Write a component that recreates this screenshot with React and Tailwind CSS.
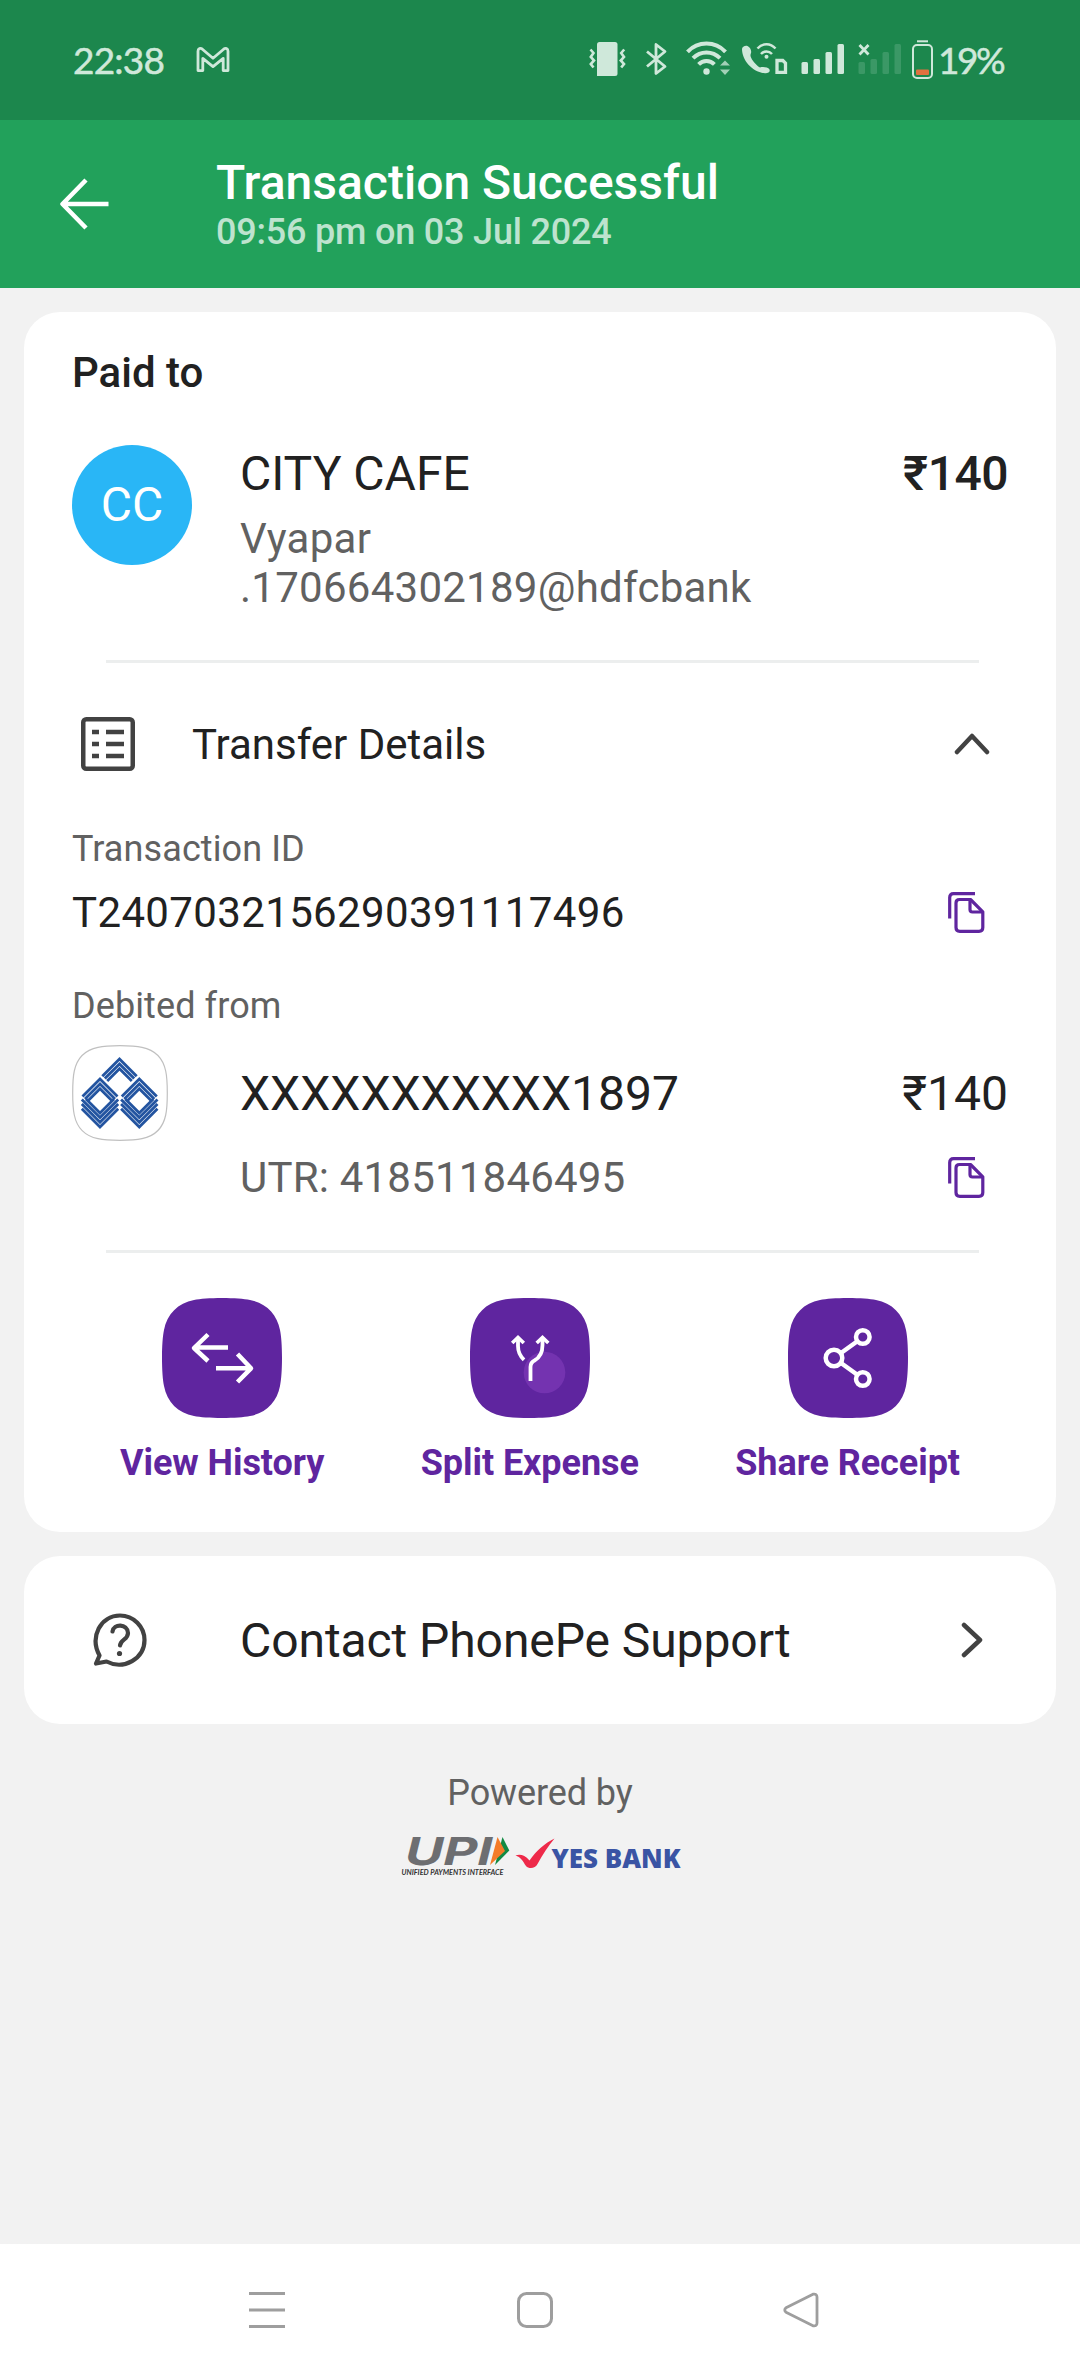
import React from 'react';

const LIGHT = '#cfe8da';

function GmailIcon() {
  return (
    <svg width="34" height="28" viewBox="0 0 34 28" fill="none" stroke={LIGHT} strokeWidth="2.8" strokeLinejoin="round">
      <path d="M2 24.6V5.2C2 2.4 4.4 1.6 6.4 3.2L17 12.2L27.6 3.2C29.6 1.6 32 2.4 32 5.2V24.6H27.2V12.4L17 20.6L6.8 12.4V24.6Z" />
    </svg>
  );
}

function StatusIcons() {
  return (
    <div className="flex items-center">
      {/* vibrate */}
      <svg className="mr-5" width="37" height="40" viewBox="0 0 37 40" fill="none" stroke={LIGHT} strokeWidth="2.6">
        <path d="M8 36V4.5Q8 2 10.5 2H26Q28.5 2 28.5 4.5V33.5Q28.5 36 26 36Z" fill={LIGHT} stroke="none" />
        <path d="M1.5 9.5L4.5 13L1.8 17L5 20.5L1.8 24L4.5 27.5" />
        <path d="M35.2 9.5L32.2 13L35 17L31.8 20.5L35 24L32.2 27.5" />
      </svg>
      {/* bluetooth */}
      <svg className="mr-[19px]" width="21" height="40" viewBox="0 0 21 40" fill="none" stroke={LIGHT} strokeWidth="2.8">
        <path d="M1 11.5L19 26.5L10 33.5V4.5L19 11.5L1 26.5" strokeLinejoin="round" />
      </svg>
      {/* wifi */}
      <svg className="mr-[11px]" width="44" height="40" viewBox="0 0 44 40" fill="none" stroke={LIGHT} strokeWidth="4">
        <path d="M1.5 11.8C12 0.8 29 0.8 39.5 11.8" />
        <path d="M7 18.2C14.6 10.6 26.4 10.6 34 18.2" />
        <path d="M12.6 24.4C17 20 24 20 28.4 24.4" />
        <circle cx="20.5" cy="31.5" r="3.2" fill={LIGHT} stroke="none" />
        <path d="M34 25.5L39 20.5L44 25.5ZM34 29.5H44L39 35Z" fill={LIGHT} stroke="none" opacity="0.75" />
      </svg>
      {/* wifi calling */}
      <svg className="mr-[13px]" width="47" height="40" viewBox="0 0 47 40" fill="none" stroke={LIGHT} strokeWidth="2.5">
        <path d="M1 9C1 7 4 5.2 6.5 6C9 7 10.8 10.5 10 13C9.3 15 9 16 11 19.5C13.5 23.3 17 26.6 19 27.5C21.5 26.5 27 27 28.5 29.5C29.5 32 27 33.5 24 33.3C11 32 1 20 1 9Z" fill={LIGHT} stroke="none" />
        <path d="M16.5 8.5C21.5 2.8 29.5 2.8 34.5 8.5M20 14C23 10.7 28 10.7 31 14" />
        <circle cx="25.5" cy="16.8" r="2" fill={LIGHT} stroke="none" />
        <path d="M36 20.5H41.8L44.5 23.2V32.3H36Z" strokeWidth="3.3" />
      </svg>
      {/* signal, sim 1 */}
      <svg className="mr-3.5" width="43" height="40" viewBox="0 0 43 40" fill={LIGHT}>
        <rect x="0.5" y="22" width="6.5" height="12" rx="1.5" />
        <rect x="12.5" y="19" width="6.5" height="15" rx="1.5" />
        <rect x="24.5" y="12" width="6.5" height="22" rx="1.5" />
        <rect x="36.5" y="4" width="6.5" height="30" rx="1.5" />
      </svg>
      {/* signal, sim 2 (no service) */}
      <svg className="mr-2.5" width="44" height="40" viewBox="0 0 44 40">
        <g fill="#3b9866">
          <rect x="0.5" y="22" width="6.5" height="12" rx="1.5" />
          <rect x="12.5" y="19" width="6.5" height="15" rx="1.5" />
          <rect x="24.5" y="12" width="6.5" height="22" rx="1.5" />
          <rect x="36.5" y="4" width="6.5" height="30" rx="1.5" />
        </g>
        <path d="M1.5 5L10.5 14.5M10.5 5L1.5 14.5" stroke={LIGHT} strokeWidth="2.8" />
      </svg>
      {/* battery */}
      <svg className="mr-[5px]" width="21" height="40" viewBox="0 0 21 40" fill="none">
        <rect x="5" y="0.3" width="11" height="2" fill={LIGHT} />
        <rect x="1" y="5" width="19" height="33" rx="4" stroke={LIGHT} strokeWidth="2" />
        <rect x="4" y="29.5" width="13" height="5.5" rx="1" fill="#e0713f" />
      </svg>
      <span className="w-[66px] whitespace-nowrap font-['Lato',sans-serif] text-[37px] leading-10 tracking-[-2.4px] [-webkit-text-stroke:0.5px_#cfe8da]">19%</span>
    </div>
  );
}

function BankLogo() {
  return (
    <svg width="96" height="96" viewBox="0 0 96 96" fill="none">
      <path d="M48 0.7C58 0.7 65 1.2 70 2.3C83 5 91 13 93.7 26C94.8 31 95.3 38 95.3 48S94.8 65 93.7 70C91 83 83 91 70 93.7C65 94.8 58 95.3 48 95.3S31 94.8 26 93.7C13 91 5 83 2.3 70C1.2 65 0.7 58 0.7 48S1.2 31 2.3 26C5 13 13 5 26 2.3C31 1.2 38 0.7 48 0.7Z" fill="#fff" stroke="#c0c0c0" strokeWidth="1.2" />
      <g stroke="#2354a0" strokeWidth="2.8">
        <path d="M30.3 31.2L47.5 14L64.7 31.2M32.8 33.6L47.5 18.9L62.2 33.6M35.2 36.1L47.5 23.8L59.8 36.1" />
        {[28, 67.3].map((cx) => (
          <g key={cx} transform={`translate(${cx} 0)`}>
            <path d="M-17.5 51.5L0 34L17.5 51.5M-15 53.9L0 38.9L15 53.9M-12.5 56.3L0 43.8L12.5 56.3" />
            <path d="M-18.2 63.8L0 82L18.2 63.8M-18.2 59.1L0 77.3L18.2 59.1M-18.2 54.4L0 72.6L18.2 54.4M-14 53.9L0 67.9L14 53.9" />
          </g>
        ))}
      </g>
    </svg>
  );
}

function CopyIcon() {
  return (
    <svg className="mr-[23px] mb-px" width="37" height="41" viewBox="0 0 37 41" fill="none" stroke="#5f259f" strokeWidth="3.2" strokeLinejoin="round">
      <path d="M27 1.7H5.5Q1.7 1.7 1.7 5.5V26.5" />
      <path d="M11.5 7.5H22.5L34.8 19.8V35.5Q34.8 39.3 31 39.3H11.8Q8 39.3 8 35.5V11Q8 7.5 11.5 7.5Z" />
      <path d="M22 8V17.5Q22 20 24.5 20H34" />
    </svg>
  );
}

function Divider() {
  return <div className="mt-12 ml-[34px] h-[3px] w-[873px] bg-[#eceeee]" />;
}

function Action({ label, children }) {
  return (
    <button className="flex flex-col items-center">
      <svg width="120" height="120" viewBox="0 0 120 120" fill="none" stroke="#fff" strokeWidth="4.5">
        <path
          d="M60 0C72 0 82 0.7 88 2C104 5 115 16 118 32C119.3 38 120 48 120 60S119.3 82 118 88C115 104 104 115 88 118C82 119.3 72 120 60 120S38 119.3 32 118C16 115 5 104 2 88C0.7 82 0 72 0 60S0.7 38 2 32C5 16 16 5 32 2C38 0.7 48 0 60 0Z"
          fill="#5f259f"
          stroke="none"
        />
        {children}
      </svg>
      <span className="mt-6 text-[36px] leading-[42px] font-bold tracking-[-0.06px] text-[#5f259f]">{label}</span>
    </button>
  );
}

function PartnerLogos() {
  return (
    <svg className="mx-auto mt-[11px] block" width="300" height="64" viewBox="-10 -10 300 64">
      <g transform="translate(2.5 30) skewX(-14)">
        <text x="0" y="0" fontFamily="Inter, sans-serif" fontWeight="700" fontSize="38.5" textLength="87" lengthAdjust="spacingAndGlyphs" fill="#6d6e71">UPI</text>
      </g>
      <path d="M102.5 2L109.3 15.5L95 30Z" fill="#128a43" />
      <path d="M97.5 2L105 16L90 30Z" fill="#f47b28" />
      <text x="1.5" y="39.8" fontFamily="Lato, sans-serif" fontStyle="italic" fontWeight="700" fontSize="8" textLength="102" lengthAdjust="spacingAndGlyphs" fill="#333">UNIFIED PAYMENTS INTERFACE</text>
      <path d="M115.5 20.5C120 19 124.5 19.8 129.5 25.5C137 15 144.5 8.5 154.5 3.5C148 11 142.5 20 137.5 29C135.5 33.5 129 34.500 126 31C124 28.5 123.5 26.5 121.5 24.5C120 22.5 118 21.3 115.5 20.5Z" fill="#ee2a4a" />
      <text x="151.5" y="33" fontFamily="Open Sans, sans-serif" fontWeight="800" fontSize="26" textLength="129" lengthAdjust="spacingAndGlyphs" fill="#3a54a4">YES BANK</text>
    </svg>
  );
}

export default function App() {
  return (
    <div className="flex h-[2376px] w-[1080px] flex-col bg-[#f2f2f2] font-['Roboto',sans-serif] text-[#212121]">
      {/* Status bar */}
      <div className="flex h-[120px] items-center justify-between bg-[#1c874d] pr-[76px] pl-[73px] text-[#cfe8da]">
        <div className="flex items-center">
          <span className="w-[123px] font-['Lato',sans-serif] text-[37px] leading-10 tracking-[-0.8px] [-webkit-text-stroke:0.5px_#cfe8da]">22:38</span>
          <GmailIcon />
        </div>
        <StatusIcons />
      </div>

      {/* Header */}
      <header className="flex h-[168px] bg-[#22a15b] pl-[60px]">
        <svg className="mt-[58px] mr-[107px]" width="49" height="52" viewBox="0 0 49 52" fill="none" stroke="#fff" strokeWidth="4.5">
          <path d="M48.5 26H3M26 2L2.5 26L26 50" strokeLinejoin="round" />
        </svg>
        <div className="pt-[35px]">
          <h1 className="text-[48px] leading-14 font-medium text-white">Transaction Successful</h1>
          <p className="text-[36px] leading-[42px] font-medium tracking-[-0.2px] text-[#bde3ce]">09:56 pm on 03 Jul 2024</p>
        </div>
      </header>

      <main className="flex-1 px-6 pt-6">
        <section className="rounded-[36px] bg-white px-12 pt-[37px] pb-12">
          <h2 className="text-[42px] leading-12 font-medium">Paid to</h2>

          {/* Payee */}
          <div className="mt-12 flex">
            <div className="flex size-[120px] items-center justify-center rounded-full bg-[#29b6f6] text-[48px] leading-14 text-white">CC</div>
            <div className="ml-12 flex-1 pt-px">
              <div className="flex justify-between text-[48px] leading-14">
                <span>CITY CAFE</span>
                <span className="font-medium tracking-[-0.5px]">₹140</span>
              </div>
              <p className="mt-3 text-[42px] leading-[49px] tracking-[0.26px] text-[#616161]">
                Vyapar
                <br />
                .170664302189@hdfcbank
              </p>
            </div>
          </div>

          <Divider />

          {/* Transfer details */}
          <div className="mt-[54px] flex items-center pl-[9px]">
            <svg width="54" height="54" viewBox="0 0 54 54" fill="none" stroke="#424242" strokeWidth="4.5">
              <rect x="2.25" y="2.25" width="49.5" height="49.5" rx="3" />
              <path d="M11 15H18M25 15H43M11 27H18M25 27H43M11 39H18M25 39H43" />
            </svg>
            <span className="ml-[57px] flex-1 pt-0.5 text-[42px] leading-12">Transfer Details</span>
            <svg className="mr-[18px]" width="36" height="24" viewBox="0 0 36 24" fill="none" stroke="#424242" strokeWidth="4.5" strokeLinecap="round" strokeLinejoin="round">
              <path d="M3 20L18 4L33 20" />
            </svg>
          </div>

          <p className="mt-[57px] text-[36px] leading-[42px] tracking-[0.1px] text-[#616161]">Transaction ID</p>
          <div className="mt-[19px] flex h-12 items-center justify-between">
            <span className="text-[42px] leading-12 tracking-[0.36px]">T2407032156290391117496</span>
            <CopyIcon />
          </div>

          <p className="mt-12 text-[36px] leading-[42px] tracking-[0.1px] text-[#616161]">Debited from</p>
          <div className="mt-[18px] flex items-center text-[48px] leading-14">
            <BankLogo />
            <span className="ml-[72px] flex-1 pt-px">XXXXXXXXXXX1897</span>
            <span className="pt-px">₹140</span>
          </div>
          <div className="mt-[13px] flex h-12 items-center justify-between pl-[168px]">
            <span className="text-[42px] leading-12 tracking-[0.2px] text-[#616161]">UTR: 418511846495</span>
            <CopyIcon />
          </div>

          <Divider />

          {/* Actions */}
          <div className="mt-[45px] flex justify-between px-12">
            <Action label="View History">
              <path d="M66 49.5H32M46 36.5L32 50L46 63" strokeLinejoin="round" />
              <path d="M54 70.3H88M75.5 56L89 70.3L75.5 84" strokeLinejoin="round" />
            </Action>
            <Action label="Split Expense">
              <circle cx="74.5" cy="74.5" r="20.8" fill="#7433b0" stroke="none" />
              <path d="M48 41V48C48 54 50.5 58.5 54 61.8" strokeWidth="3.8" />
              <path d="M72.5 41V47C72.5 56 69 60 64.5 62.5C61.5 64 60.5 66 60.5 69V83" strokeWidth="3.8" />
              <path d="M42.2 45L48 39.5L53.8 45M66.7 45L72.5 39.500L78.3 45" strokeWidth="3.6" />
            </Action>
            <Action label="Share Receipt">
              <circle cx="46" cy="60" r="8.3" />
              <circle cx="74.8" cy="39" r="6.8" />
              <circle cx="74.8" cy="81" r="6.8" />
              <path d="M53 55L69 43.5M53 65L69 76.5" />
            </Action>
          </div>
        </section>

        {/* Support */}
        <section className="mt-6 flex h-[168px] items-center rounded-[36px] bg-white pr-[72px] pl-[69px]">
          <svg width="54" height="54" viewBox="0 0 54 54" fill="none" stroke="#424242" strokeWidth="4.2" strokeLinecap="round" strokeLinejoin="round">
            <path d="M3 50.5L6.5 42.5C-3.5 24 7.5 2.5 27 2.5C40.5 2.5 51.5 13.5 51.5 27C51.5 45.5 31 57.5 13.5 48.5Z" />
            <path d="M19.5 18.5C20.5 10.5 34.5 10.5 35 20C35 27 27.5 26 27 32.5" />
            <circle cx="26.5" cy="40.5" r="2.6" fill="#424242" stroke="none" />
          </svg>
          <span className="ml-[93px] flex-1 pt-px text-[48px] leading-14 tracking-[-0.08px]">Contact PhonePe Support</span>
          <svg width="24" height="36" viewBox="0 0 24 36" fill="none" stroke="#424242" strokeWidth="4.5" strokeLinecap="round" strokeLinejoin="round">
            <path d="M4 3L20 18L4 33" />
          </svg>
        </section>

        <p className="mt-12 text-center text-[36px] leading-[42px] tracking-[-0.1px] text-[#616161]">Powered by</p>
        <PartnerLogos />
      </main>

      {/* Navigation bar */}
      <nav className="flex h-[132px] items-center bg-white pl-[249px]">
        <svg width="36" height="36" viewBox="0 0 36 36" stroke="#9e9e9e" strokeWidth="3">
          <path d="M0 1.5H36M0 18H36M0 34.5H36" />
        </svg>
        <svg className="ml-[232px]" width="36" height="36" viewBox="0 0 36 36" fill="none" stroke="#9e9e9e" strokeWidth="3">
          <rect x="1.5" y="1.5" width="33" height="33" rx="8" />
        </svg>
        <svg className="ml-[230px]" width="36" height="36" viewBox="0 0 36 36" fill="none" stroke="#9e9e9e" strokeWidth="2.8">
          <path d="M30 2.2L3 15.7Q0.5 18 3 20.3L30 33.8Q34 34.5 34 31V5Q34 1.500 30 2.2Z" strokeLinejoin="round" />
        </svg>
      </nav>
    </div>
  );
}
